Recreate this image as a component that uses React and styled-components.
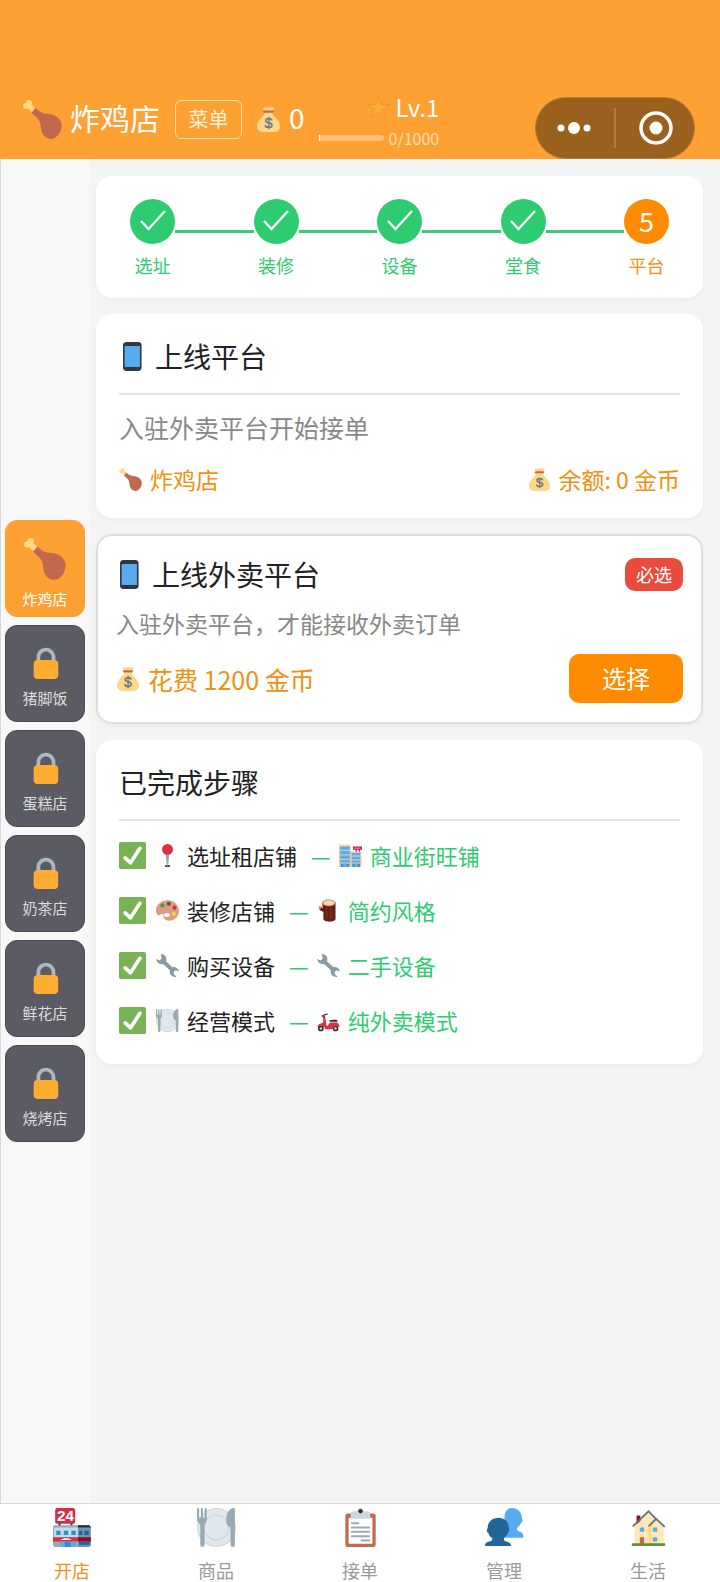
import React, { useState } from 'react'
import styled, { createGlobalStyle } from 'styled-components'

const GlobalStyle = createGlobalStyle`
    * { box-sizing: border-box; }
    body {
        margin: 0;
        background: #f4f4f4;
        color: #222;
        font-family: 'Noto Sans CJK SC', 'Noto Sans', sans-serif;
    }
    button { font-family: inherit; cursor: pointer; }
    h1, h2, h3, p, ol, ul { margin: 0; padding: 0; font-weight: 400; list-style: none; }
`

const Page = styled.div`
    display: flex;
    flex-direction: column;
    min-height: 100vh;
`

/* ---------- icons ---------- */

const Svg = styled.svg`
    display: block;
    flex: none;
    width: ${p => p.$size}px;
    height: ${p => p.$size}px;
`

const Icon = ({ size = 23, children }) => (
    <Svg $size={size} viewBox="0 0 36 36" aria-hidden="true">{children}</Svg>
)

const Drumstick = ({ size }) => (
    <Icon size={size}>
        <path d="M4.5 4.5l8 7.5" stroke="#FFD983" strokeWidth="5" />
        <circle cx="5.6" cy="2.8" r="2.7" fill="#FFD983" />
        <circle cx="2.8" cy="5.4" r="2.7" fill="#FFD983" />
        <path fill="#C1694F" d="M11.6 7.2c2.2 2.3 5.4 5.200 10.400 5.400 6 .2 10.800 2.600 13 7.400 2.200 6-1.500 13.500-7 15.500-4.500 1.500-9-1.500-10.700-6-1-2.700-.6-5.500-1.600-8.500-1-3.500-4.500-6-7.900-9.200z" />
    </Icon>
)

const MoneyBag = ({ size }) => (
    <Icon size={size}>
        <path fill="#FDD888" d="M12.500 8h11c.5 3 2 4.500 4 6.500C31 18 34.500 22 34.500 27.500c0 6-3.500 8.500-8 8.500h-17c-4.500 0-8-2.500-8-8.500C1.500 22 5 18 8.500 14.500c2-2 3.500-3.500 4-6.500z" />
        <path fill="#FDD888" d="M10.500 1c2-1.500 3.500.5 5 0S17 0 18 0s1.500.5 3 .8S24.500-.5 26 1s-2 4-3 5H13c-1-1-4-3.500-2.500-5z" />
        <path fill="#BF6952" d="M12 5h12a1.600 1.600 0 0 1 0 3.200H12a1.600 1.600 0 0 1 0-3.200z" />
        <text x="18" y="30" textAnchor="middle" fontFamily="Liberation Sans, sans-serif" fontSize="21" fill="#67757F" stroke="#67757F" strokeWidth=".5">$</text>
    </Icon>
)

const Star = ({ size }) => (
    <Icon size={size}>
        <path fill="#FFAC33" stroke="#E6931F" strokeWidth="1" strokeLinejoin="round" d="M18 1.500l4.200 11.700 12.300.3-9.800 7.500 3.600 12L18 26l-10.300 7 3.600-12-9.800-7.500 12.300-.3z" />
    </Icon>
)

const Phone = ({ size }) => (
    <Icon size={size}>
        <path fill="#31373D" d="M9 36s-4 0-4-4V4s0-4 4-4h15s4 0 4 4v28s0 4-4 4H9z" />
        <path fill="#55ACEE" d="M7 5h19v26H7z" />
    </Icon>
)

const Lock = ({ size }) => (
    <Icon size={size}>
        <path fill="#AAB8C2" d="M19 3C13.477 3 9 7.477 9 13v10h4V13c0-3.313 2.686-6 6-6s6 2.687 6 6v10h4V13c0-5.523-4.477-10-10-10z" />
        <path fill="#FFAC33" d="M32 32c0 2.209-1.791 4-4 4H10c-2.209 0-4-1.791-4-4V20c0-2.209 1.791-4 4-4h18c2.209 0 4 1.791 4 4v12z" />
    </Icon>
)

const CheckBox = ({ size }) => (
    <Icon size={size}>
        <path fill="#77B255" d="M36 33.500c0 1.400-1.100 2.500-2.500 2.500h-31C1.100 36 0 34.900 0 33.500v-31C0 1.100 1.100 0 2.500 0h31C34.900 0 36 1.100 36 2.500v31z" />
        <path fill="#FFF" d="M29.280 6.362c-1.156-.751-2.704-.422-3.458.736L14.936 23.877l-5.029-4.650c-1.014-.938-2.596-.875-3.533.138-.937 1.014-.875 2.596.139 3.533l7.209 6.666c.48.445 1.090.665 1.696.665.673 0 1.534-.282 2.099-1.139.332-.506 12.500-19.270 12.500-19.270.751-1.159.421-2.707-.737-3.458z" />
    </Icon>
)

const Pin = () => (
    <Icon>
        <ellipse cx="18" cy="34.500" rx="4.500" ry="1.500" fill="#292F33" />
        <path fill="#99AAB5" d="M15 14h6l-2 21h-2z" />
        <circle cx="18" cy="8.500" r="8.500" fill="#DD2E44" />
    </Icon>
)

const Mall = () => (
    <Icon>
        <path fill="#DAC8B1" d="M0 1h18v35H0zM18 12h17v24H18z" />
        <path fill="#FFE8B6" d="M0 0h18v3H0z" />
        <path fill="#55ACEE" d="M2 4h15v5H2zM2 11h15v5H2zM2 18h15v5H2zM2 25h15v4H2zM20 14h13v4H20zM20 20h13v4H20zM20 26h13v3H20z" />
        <path fill="#3B88C3" d="M3 31h13v5H3zM21 31h12v5H21z" />
        <path fill="#55ACEE" d="M6 31h7v5H6zM24 31h6v5h-6z" />
        <path fill="#BE1931" d="M22 4h14v5H22zM26 9h2v3h-2zM31 9h2v3h-2z" />
        <path stroke="#F4ABBA" strokeWidth="1.500" d="M24 6.500h10" />
    </Icon>
)

const Palette = () => (
    <Icon>
        <path fill="#D99E82" d="M18 2C8 2 0 9 0 18c0 5 2 7.500 4.500 7.200 2.500-.2 4-2.200 6-1.700 2.500.7.500 3.500 1.500 6 1 2.500 4.500 4.500 9 4.500 8.500 0 15-7 15-15.500C36 9.500 28 2 18 2z" />
        <ellipse cx="17" cy="25" rx="4.500" ry="3" fill="#FFF" />
        <circle cx="10" cy="10" r="3.200" fill="#5C913B" />
        <circle cx="20" cy="7.500" r="3.200" fill="#4B545D" />
        <circle cx="29" cy="13.500" r="3.200" fill="#DD2E44" />
        <circle cx="28" cy="23" r="3.200" fill="#FFCC4D" />
    </Icon>
)

const Wood = () => (
    <Icon>
        <path fill="#662113" d="M8 5h21v26c0 6-19 6-19 0V20c-3-.5-6-2.500-7-5-.6-2 2-4 3.500-2.500L9 15z" />
        <path fill="#853020" d="M14 12h2v19h-2zM21 13h2v18h-2z" />
        <ellipse cx="18.500" cy="6" rx="10.500" ry="5.500" fill="#D99E82" />
        <ellipse cx="18.500" cy="6" rx="8" ry="3.700" fill="#FFD3A6" />
        <ellipse cx="4.500" cy="13" rx="2" ry="2.500" fill="#D99E82" />
    </Icon>
)

const Wrench = () => (
    <Icon>
        <path fill="#8899A6" d="M7.500 0c4.500-.3 8.500 2.800 8.700 7.200.1 1.700-.3 3-.7 4.300l10 9.300c4.500-1.300 9.500 1.700 10.500 6.500l-5-1.800-3.500 2.300.8 4.200 4 3.500c-5 1.500-10.500-2-10.800-7-.1-1.200 0-2 .3-3L11.500 16C6 17 1 13.500 0 8l5.500 2L9 7z" />
    </Icon>
)

const Plate = ({ size }) => (
    <Icon size={size}>
        <circle cx="18" cy="18" r="18" fill="#CCD6DD" />
        <circle cx="18" cy="18" r="17" fill="#E1E8ED" />
        <circle cx="18" cy="18" r="11.500" fill="#E1E8ED" stroke="#CCD6DD" strokeWidth="1.200" />
        <path fill="#99AAB5" d="M0 1a1 1 0 0 1 2 0v8h1.500V1a1 1 0 0 1 2 0v8H7V1a1 1 0 0 1 2 0v9c0 2.500-.5 4-2 5v19a2 2 0 0 1-4 0V15C1 14 0 12.500 0 10z" />
        <path fill="#99AAB5" d="M34 0c1 0 1 1 1 2v32a2 2 0 0 1-4 0V18c-3-1-4-3-4-7 0-6 3-11 7-11z" />
    </Icon>
)

const Scooter = () => (
    <Icon>
        <circle cx="6" cy="30.500" r="4.500" fill="#292F33" />
        <circle cx="6" cy="30.500" r="2" fill="#CCD6DD" />
        <circle cx="29" cy="30.500" r="4.500" fill="#292F33" />
        <circle cx="29" cy="30.500" r="2" fill="#CCD6DD" />
        <path fill="none" stroke="#292F33" strokeWidth="1.800" strokeLinecap="round" d="M8 11l4-2 4-1" />
        <path fill="#DD2E44" d="M9.500 12l3-1 1.500 8c.5 4 0 6 1.500 7.500 3-.5 2-4 5-5.500h11c2.500 2 4 5 4 7.500-3.500-2.500-8-2-10.500 1.500-.8 1.200-1.500 1.500-3 1.500H13c-1-2.500-2-4.500-5-5-3-.4-5.500.5-7 2.500-.5-4 3-6.500 8-7 1-3 1-6.500.500-10z" />
        <path fill="#292F33" d="M19 18c4-1.500 9-1.500 13-.5V20H20z" />
        <circle cx="10.500" cy="11.500" r="2" fill="#BE1931" />
    </Icon>
)

const Store24 = ({ size }) => (
    <Icon size={size}>
        <path fill="#55304A" d="M5 13h2v5H5zM16 13h2v5h-2z" />
        <rect x="2" width="18.500" height="14.500" rx="2" fill="#D32F48" />
        <text x="11.500" y="12" textAnchor="middle" fontFamily="Liberation Sans, sans-serif" fontSize="14" fontWeight="700" fill="#FFF">24</text>
        <path fill="#99AAB5" d="M1 16h22v20H2c-1 0-2-1-2-2V18c0-1 .5-2 1-2z" />
        <path fill="#BDDDF4" d="M1 18h22v9H1z" />
        <path fill="#6B96B6" d="M23 16h10c1 0 2 1 2 2v16c0 1-1 2-2 2H23z" />
        <path fill="#292F33" d="M23 16h10.500l1.500 2H23z" />
        <path fill="#3B88C3" d="M3 21h4v4H3zM10 21h4v4h-4zM17 21h4v4h-4z" />
        <path fill="#226699" d="M24 21h3v4h-3zM29 21h4v4h-4z" />
        <path fill="#DD2E44" d="M0 27h23v4H0z" />
        <path fill="#A0041E" d="M23 27h12v4H23z" />
        <path fill="#FFF" d="M7 29.500c2-2 8-2 10 0z" />
        <path fill="#55ACEE" d="M7 31h14v5H7z" />
        <path fill="#3B88C3" d="M11 31h5v5h-5z" />
        <path fill="#226699" d="M24 31h10v3H24z" />
    </Icon>
)

const Clipboard = ({ size }) => (
    <Icon size={size}>
        <path fill="#C1694F" d="M32 34c0 1.104-.896 2-2 2H6c-1.104 0-2-.896-2-2V7c0-1.104.896-2 2-2h24c1.104 0 2 .896 2 2v27z" />
        <path fill="#FFF" d="M29 32c0 .553-.447 1-1 1H8c-.552 0-1-.447-1-1V10c0-.552.448-1 1-1h20c.553 0 1 .448 1 1v22z" />
        <path fill="#CCD6DD" d="M25 3h-4c0-1.657-1.343-3-3-3s-3 1.343-3 3h-4c-1.104 0-2 .896-2 2v5h18V5c0-1.104-.896-2-2-2z" />
        <circle cx="18" cy="3" r="2" fill="#292F33" />
        <path stroke="#99AAB5" strokeWidth="1.800" strokeLinecap="round" d="M10 14h6M10 18h16M10 22h16M10 26h16M19 30h7" />
    </Icon>
)

const People = ({ size }) => (
    <Icon size={size}>
        <path fill="#55ACEE" d="M25 0c5 0 9 4 9 9 0 1 1 2 .5 3.500-.3 1-1 1.200-1.500 1.500-.8 2-2 3.500-3.500 4.500-.5 2 .5 3 3 3.500 2 .6 3 2 3 5.500H18V9c0-5 2-9 7-9z" />
        <path fill="#226699" d="M12.500 9c5.500 0 9.500 4 9.500 9 0 1 .6 2 .3 3.200-.3 1-.9 1.600-1.500 2-.6 2-1.800 3.500-3.300 4.600-.4 1.800.4 2.700 2.500 3.200 2.500.6 4 2 4 4H0c0-2.500 1.500-3.400 4-4 2.500-.6 3-1.500 2.500-3.200-1.500-1-2.700-2.600-3.300-4.600-.7-.4-1.300-1-1.500-2C1.400 20 2.500 19 2.500 18c0-5 4.500-9 10-9z" />
    </Icon>
)

const House = ({ size }) => (
    <Icon size={size}>
        <path fill="#FFE8B6" d="M5 16L18 3l10 9 4 4v17H5z" />
        <path fill="#FFD983" d="M18 18l3-4v19h-3z" />
        <path fill="#A0041E" d="M7 7h3.500v5L7 15z" />
        <path fill="none" stroke="#66757F" strokeWidth="1.700" strokeLinecap="round" d="M4 16.500L18 3l7 7M18.500 16.500l6.500-6.500 7.500 7" />
        <path fill="#C1694F" d="M10 27h4v6h-4z" />
        <path fill="#55ACEE" d="M10 18h4v4h-4zM22 18h4v4h-4zM22 27h4v4h-4z" />
        <path fill="#5C913B" d="M3.500 32.500h29c.6 0 1 .5 1 1.200s-.4 1.300-1 1.300h-29c-.6 0-1-.6-1-1.300s.4-1.200 1-1.200z" />
    </Icon>
)

/* ---------- header ---------- */

const Header = styled.header`
    display: flex;
    align-items: flex-start;
    padding: 97px 25px 0 23px;
    background: #ffa033;
    color: #fff;
`

const Shop = styled.div`
    display: flex;
    align-items: center;
    height: 45px;
    white-space: nowrap;
`

const ShopName = styled.h1`
    margin: 0 15px 0 8px;
    padding-bottom: 6px;
    font-size: 30px;
    line-height: 36px;
`

const MenuButton = styled.button`
    width: 67px;
    height: 39px;
    margin-right: 14px;
    padding: 0 0 2px;
    border: 1px solid #ffe2a8;
    border-radius: 6px;
    background: transparent;
    color: #fff3dc;
    font-size: 20px;
    line-height: 30px;
`

const Coins = styled.span`
    margin-left: 8px;
    padding-bottom: 6px;
    font-size: 28px;
    line-height: 36px;
`

const Level = styled.div`
    display: flex;
    flex-direction: column;
    align-items: flex-end;
    margin-left: 14px;
`

const LevelName = styled.div`
    display: flex;
    align-items: center;
    gap: 6px;
    height: 20px;
    font-size: 24px;
    line-height: 20px;
`

const Experience = styled.div`
    display: flex;
    align-items: center;
    gap: 5px;
    margin-top: 11px;
    color: #ffdcae;
    font-size: 16px;
    line-height: 20px;
`

const Track = styled.div`
    width: 65px;
    height: 6px;
    border-left: 1px solid #fff;
    border-radius: 0 3px 3px 0;
    background: #ffbf75;
`

const Capsule = styled.div`
    display: flex;
    align-items: center;
    width: 160px;
    height: 62px;
    margin-left: auto;
    border: 1px solid #b9782c;
    border-radius: 31px;
    background: #99601e;
`

const CapsuleButton = styled.button`
    display: flex;
    align-items: center;
    justify-content: center;
    flex: 1;
    height: 40px;
    padding: 0;
    border: 0;
    background: transparent;

    & + & { border-left: 2px solid #b37a3b; }
`

/* ---------- body ---------- */

const Body = styled.div`
    display: flex;
    flex: 1;
`

const Sidebar = styled.nav`
    display: flex;
    flex-direction: column;
    justify-content: center;
    gap: 8px;
    flex: none;
    width: 90px;
    padding: 0 5px 0 4px;
    border-left: 1px solid #d8d8d8;
    background: #f8f8f8;
`

const ShopTile = styled.button`
    display: flex;
    flex-direction: column;
    align-items: center;
    justify-content: flex-end;
    height: 97px;
    padding: 0 0 ${p => p.$open ? 6 : 12}px;
    border: 1px solid ${p => p.$open ? '#ffa033' : '#4b4b54'};
    border-radius: 12px;
    background: ${p => p.$open ? '#ffa033' : '#5b5b64'};
    color: ${p => p.$open ? '#fff' : '#dcdcdc'};
    font-size: 15px;
    line-height: 22px;
`

const TileIcon = styled.span`
    margin-bottom: 8px;
`

const Main = styled.main`
    display: flex;
    flex-direction: column;
    gap: 16px;
    flex: 1;
    padding: 17px 17px 16px 6px;
`

const Card = styled.section`
    padding: 23px;
    border-radius: 16px;
    background: #fff;
    box-shadow: 0 2px 4px rgba(0, 0, 0, 0.04);
`

const Steps = styled.ol`
    display: flex;
    align-items: flex-start;
    padding: 0 11px;
`

const Step = styled.li`
    display: flex;
    flex-direction: column;
    align-items: center;
    gap: 11px;
    width: 45px;
    color: ${p => p.$done ? '#2ecc71' : '#f0900f'};
    font-size: 18px;
    line-height: 20px;
    white-space: nowrap;
`

const StepMark = styled.span`
    display: flex;
    align-items: center;
    justify-content: center;
    width: 45px;
    height: 45px;
    border-radius: 50%;
    background: ${p => p.$done ? '#2ecc71' : '#ff8c00'};
    color: #fff;
    font-size: 27px;
    line-height: 42px;
    padding-bottom: 2px;
`

const StepLine = styled.li`
    flex: 1;
    height: 3px;
    margin-top: 31px;
    background: #3fc878;
`

const CardTitle = styled.h2`
    display: flex;
    align-items: center;
    gap: 7px;
    padding-bottom: 18px;
    border-bottom: 2px solid #e2e2e2;
    font-size: 28px;
    line-height: 38px;
`

const Intro = styled.p`
    margin: 16px 0 20px;
    color: #888;
    font-size: 25px;
    line-height: 32px;
`

const Between = styled.div`
    display: flex;
    align-items: center;
    justify-content: space-between;
`

const Money = styled.span`
    display: flex;
    align-items: center;
    gap: 8px;
    color: #f0900f;
    font-size: ${p => p.$large ? 25 : 23}px;
    line-height: 32px;
`

const OptionCard = styled(Card)`
    padding: 20px 18px 19px;
    border: 2px solid #dedede;
`

const OptionTitle = styled.h3`
    display: flex;
    align-items: center;
    gap: 7px;
    font-size: 28px;
    line-height: 36px;
`

const Badge = styled.span`
    padding: 3px 11px 4px;
    border-radius: 10px;
    background: #e74c3c;
    color: #fff;
    font-size: 18px;
    line-height: 26px;
`

const OptionText = styled.p`
    margin: 15px 0;
    color: #888;
    font-size: 23px;
    line-height: 32px;
`

const ChooseButton = styled.button`
    width: 114px;
    height: 49px;
    padding: 0 0 2px;
    border: 0;
    border-radius: 10px;
    background: #ff8c00;
    color: #fff;
    font-size: 24px;
    line-height: 36px;
`

const DoneList = styled.ul`
    display: flex;
    flex-direction: column;
    gap: 22px;
    padding: 18px 0 4px;
`

const DoneItem = styled.li`
    display: flex;
    align-items: center;
    gap: 8px;
    font-size: 22px;
    line-height: 33px;
`

const DoneCheck = styled.span`
    margin-right: 2px;
`

const Choice = styled.span`
    display: flex;
    align-items: center;
    gap: 8px;
    margin-left: 6px;
    color: #2ecc71;
`

/* ---------- bottom bar ---------- */

const TabBar = styled.nav`
    display: flex;
    border-top: 1px solid #d8d8d8;
    background: #fff;
`

const Tab = styled.button`
    display: flex;
    flex-direction: column;
    align-items: center;
    gap: 12px;
    flex: 1;
    padding: 4px 0 1px;
    border: 0;
    background: transparent;
    color: ${p => p.$active ? '#f0900f' : '#999'};
    font-size: 18px;
    line-height: 22px;
`

const shops = ['炸鸡店', '猪脚饭', '蛋糕店', '奶茶店', '鲜花店', '烧烤店']

const steps = ['选址', '装修', '设备', '堂食', '平台']
const currentStep = 4

const doneSteps = [
    { icon: Pin, name: '选址租店铺', choiceIcon: Mall, choice: '商业街旺铺' },
    { icon: Palette, name: '装修店铺', choiceIcon: Wood, choice: '简约风格' },
    { icon: Wrench, name: '购买设备', choiceIcon: Wrench, choice: '二手设备' },
    { icon: Plate, name: '经营模式', choiceIcon: Scooter, choice: '纯外卖模式' },
]

const tabs = [
    { icon: Store24, name: '开店' },
    { icon: Plate, name: '商品' },
    { icon: Clipboard, name: '接单' },
    { icon: People, name: '管理' },
    { icon: House, name: '生活' },
]

function TopBar() {
    return (
        <Header>
            <Shop>
                <Drumstick size={39} />
                <ShopName>炸鸡店</ShopName>
                <MenuButton>菜单</MenuButton>
                <MoneyBag size={25} />
                <Coins>0</Coins>
            </Shop>
            <Level>
                <LevelName><Star size={23} />Lv.1</LevelName>
                <Experience><Track />0/1000</Experience>
            </Level>
            <Capsule>
                <CapsuleButton aria-label="更多">
                    <svg width="36" height="14" viewBox="0 0 36 14" fill="#fff">
                        <circle cx="4" cy="7" r="3.500" />
                        <circle cx="17" cy="7" r="6" />
                        <circle cx="30" cy="7" r="3.500" />
                    </svg>
                </CapsuleButton>
                <CapsuleButton aria-label="关闭">
                    <svg width="36" height="36" viewBox="0 0 36 36">
                        <circle cx="19" cy="18" r="15" fill="none" stroke="#fff" strokeWidth="3.500" />
                        <circle cx="19" cy="18" r="6.500" fill="#fff" />
                    </svg>
                </CapsuleButton>
            </Capsule>
        </Header>
    )
}

function StepBar() {
    return (
        <Card>
            <Steps>
                {steps.map((name, i) => {
                    const done = i < currentStep
                    return (
                        <React.Fragment key={name}>
                            {i > 0 && <StepLine aria-hidden="true" />}
                            <Step $done={done}>
                                <StepMark $done={done}>
                                    {done
                                        ? <svg width="26" height="21" viewBox="0 0 26 21" fill="none" stroke="#fff" strokeWidth="2.300">
                                            <path d="M1 11l7.500 8L25 1" />
                                        </svg>
                                        : i + 1}
                                </StepMark>
                                {name}
                            </Step>
                        </React.Fragment>
                    )
                })}
            </Steps>
        </Card>
    )
}

export default function App() {
    const [tab, setTab] = useState('开店')

    return (
        <Page>
            <GlobalStyle />
            <TopBar />
            <Body>
                <Sidebar>
                    {shops.map((name, i) => (
                        <ShopTile key={name} $open={i === 0}>
                            <TileIcon>
                                {i === 0 ? <Drumstick size={42} /> : <Lock size={34} />}
                            </TileIcon>
                            {name}
                        </ShopTile>
                    ))}
                </Sidebar>
                <Main>
                    <StepBar />

                    <Card>
                        <CardTitle><Phone size={29} />上线平台</CardTitle>
                        <Intro>入驻外卖平台开始接单</Intro>
                        <Between>
                            <Money><Drumstick size={23} />炸鸡店</Money>
                            <Money><MoneyBag size={23} />余额: 0 金币</Money>
                        </Between>
                    </Card>

                    <OptionCard>
                        <Between>
                            <OptionTitle><Phone size={29} />上线外卖平台</OptionTitle>
                            <Badge>必选</Badge>
                        </Between>
                        <OptionText>入驻外卖平台，才能接收外卖订单</OptionText>
                        <Between>
                            <Money $large><MoneyBag size={24} />花费 1200 金币</Money>
                            <ChooseButton>选择</ChooseButton>
                        </Between>
                    </OptionCard>

                    <Card>
                        <CardTitle>已完成步骤</CardTitle>
                        <DoneList>
                            {doneSteps.map(({ icon: StepIcon, name, choiceIcon: ChoiceIcon, choice }) => (
                                <DoneItem key={name}>
                                    <DoneCheck><CheckBox size={27} /></DoneCheck>
                                    <StepIcon />
                                    {name}
                                    <Choice>—<ChoiceIcon />{choice}</Choice>
                                </DoneItem>
                            ))}
                        </DoneList>
                    </Card>
                </Main>
            </Body>
            <TabBar>
                {tabs.map(({ icon: TabIcon, name }) => (
                    <Tab key={name} $active={tab === name} onClick={() => setTab(name)}>
                        <TabIcon size={39} />
                        {name}
                    </Tab>
                ))}
            </TabBar>
        </Page>
    )
}
